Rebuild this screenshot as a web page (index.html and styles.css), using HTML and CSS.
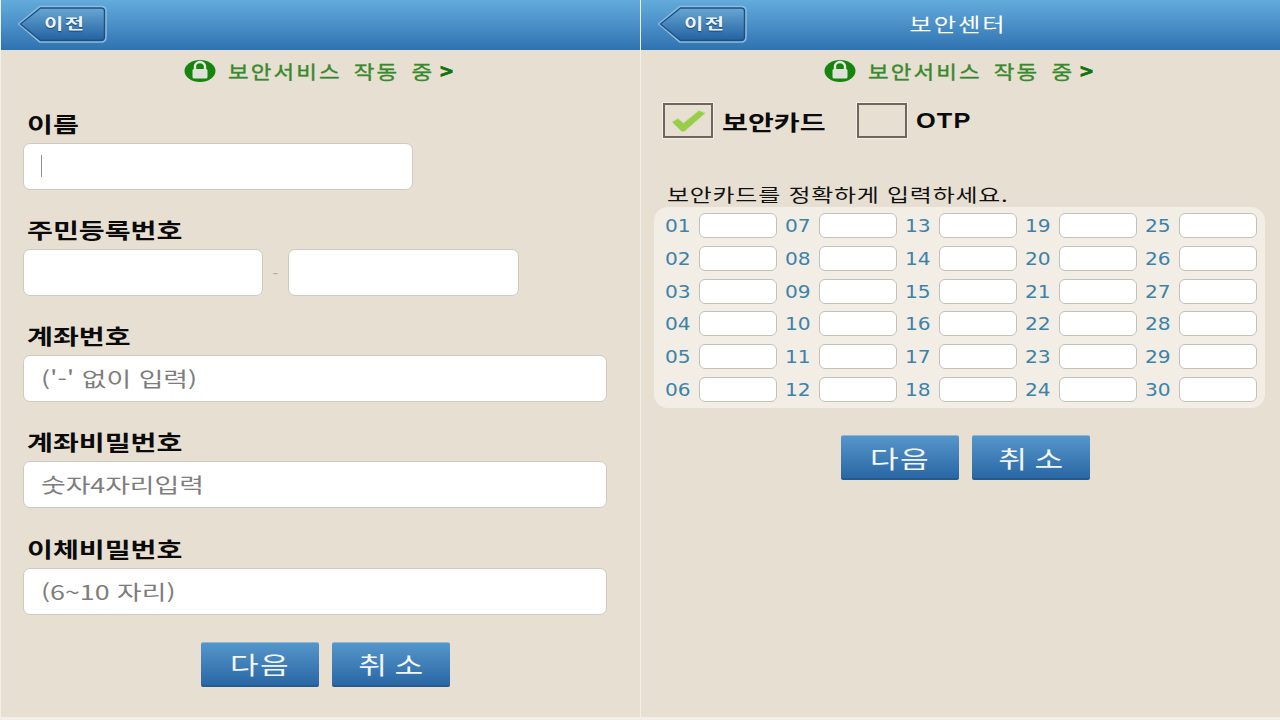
FILE: index.html
```html
<!DOCTYPE html>
<html lang="ko">
<head>
<meta charset="utf-8">
<title>보안센터</title>
<link rel="stylesheet" href="styles.css">
</head>
<body>
<main class="screen">
  <section class="panel">
    <header class="topbar">
      <a class="back">
        <svg class="back-shape" width="90" height="38" viewBox="0 0 90 38"><defs><linearGradient id="bg1" x1="0" y1="0" x2="0" y2="1"><stop offset="0" stop-color="#6ba9d6"/><stop offset="1" stop-color="#205f9f"/></linearGradient></defs><path d="M1.500 19 22 2H83Q87.500 2 87.500 6V32Q87.500 36.500 83 36.500H22Z" fill="url(#bg1)" stroke="#8fbcdc" stroke-width="2.500"/><path d="M2.500 19 22.500 3H83Q86.500 3 86.500 6V32Q86.500 35.500 83 35.500H22.500Z" fill="none" stroke="#1c4f85" stroke-width="1.400"/></svg>
        <span class="back-text">이전</span>
      </a>
    </header>
    <div class="secure">
      <svg width="32" height="24" viewBox="0 0 32 24"><ellipse cx="16" cy="12" rx="15.500" ry="11" fill="#17840f"/><path d="M11 11V7.500a5 4.500 0 0 1 10 0V11" fill="none" stroke="#e8e8e0" stroke-width="2.400"/><rect x="8.500" y="10" width="15" height="9.500" rx="1.500" fill="#dfe0d8"/></svg>
      <span class="secure-text">보안서비스 작동 중</span><b class="secure-arrow">&gt;</b>
    </div>
    <form class="form">
      <div class="group">
        <div class="label"><span class="stretch">이름</span></div>
        <div class="field w390"><i class="caret"></i></div>
      </div>
      <div class="group">
        <div class="label"><span class="stretch">주민등록번호</span></div>
        <div class="pair"><div class="field w240"></div><span class="dash">-</span><div class="field w231"></div></div>
      </div>
      <div class="group">
        <div class="label"><span class="stretch">계좌번호</span></div>
        <div class="field w584"><span class="stretch">('-' 없이 입력)</span></div>
      </div>
      <div class="group">
        <div class="label"><span class="stretch">계좌비밀번호</span></div>
        <div class="field w584"><span class="stretch">숫자4자리입력</span></div>
      </div>
      <div class="group">
        <div class="label"><span class="stretch">이체비밀번호</span></div>
        <div class="field w584"><span class="stretch">(6~10 자리)</span></div>
      </div>
    </form>
    <div class="actions"><a class="btn"><span class="btn-text">다음</span></a><a class="btn"><span class="btn-text">취 소</span></a></div>
  </section>

  <section class="panel">
    <header class="topbar">
      <a class="back">
        <svg class="back-shape" width="90" height="38" viewBox="0 0 90 38"><path d="M1.500 19 22 2H83Q87.500 2 87.500 6V32Q87.500 36.500 83 36.500H22Z" fill="url(#bg1)" stroke="#8fbcdc" stroke-width="2.500"/><path d="M2.500 19 22.500 3H83Q86.500 3 86.500 6V32Q86.500 35.500 83 35.500H22.500Z" fill="none" stroke="#1c4f85" stroke-width="1.400"/></svg>
        <span class="back-text">이전</span>
      </a>
      <h1 class="title">보안센터</h1>
    </header>
    <div class="secure">
      <svg width="32" height="24" viewBox="0 0 32 24"><ellipse cx="16" cy="12" rx="15.500" ry="11" fill="#17840f"/><path d="M11 11V7.500a5 4.500 0 0 1 10 0V11" fill="none" stroke="#e8e8e0" stroke-width="2.400"/><rect x="8.500" y="10" width="15" height="9.500" rx="1.500" fill="#dfe0d8"/></svg>
      <span class="secure-text">보안서비스 작동 중</span><b class="secure-arrow">&gt;</b>
    </div>
    <div class="choices">
      <div class="box"><svg width="36" height="24" viewBox="0 0 36 24"><path d="M2 13 8 9.500l5.500 4.500L29 1.500l6.500 2.500L14.500 22.500h-3Z" fill="#98cd48" stroke="#c3dda0" stroke-width="1"/></svg></div>
      <span class="choice-label first"><span class="stretch">보안카드</span></span>
      <div class="box"></div>
      <span class="choice-label otp"><span class="stretch-otp">OTP</span></span>
    </div>
    <p class="hint">보안카드를 정확하게 입력하세요.</p>
    <div class="card-grid">
      <div class="cell"><span class="num">01</span><i class="slot"></i></div>
      <div class="cell"><span class="num">02</span><i class="slot"></i></div>
      <div class="cell"><span class="num">03</span><i class="slot"></i></div>
      <div class="cell"><span class="num">04</span><i class="slot"></i></div>
      <div class="cell"><span class="num">05</span><i class="slot"></i></div>
      <div class="cell"><span class="num">06</span><i class="slot"></i></div>
      <div class="cell"><span class="num">07</span><i class="slot"></i></div>
      <div class="cell"><span class="num">08</span><i class="slot"></i></div>
      <div class="cell"><span class="num">09</span><i class="slot"></i></div>
      <div class="cell"><span class="num">10</span><i class="slot"></i></div>
      <div class="cell"><span class="num">11</span><i class="slot"></i></div>
      <div class="cell"><span class="num">12</span><i class="slot"></i></div>
      <div class="cell"><span class="num">13</span><i class="slot"></i></div>
      <div class="cell"><span class="num">14</span><i class="slot"></i></div>
      <div class="cell"><span class="num">15</span><i class="slot"></i></div>
      <div class="cell"><span class="num">16</span><i class="slot"></i></div>
      <div class="cell"><span class="num">17</span><i class="slot"></i></div>
      <div class="cell"><span class="num">18</span><i class="slot"></i></div>
      <div class="cell"><span class="num">19</span><i class="slot"></i></div>
      <div class="cell"><span class="num">20</span><i class="slot"></i></div>
      <div class="cell"><span class="num">21</span><i class="slot"></i></div>
      <div class="cell"><span class="num">22</span><i class="slot"></i></div>
      <div class="cell"><span class="num">23</span><i class="slot"></i></div>
      <div class="cell"><span class="num">24</span><i class="slot"></i></div>
      <div class="cell"><span class="num">25</span><i class="slot"></i></div>
      <div class="cell"><span class="num">26</span><i class="slot"></i></div>
      <div class="cell"><span class="num">27</span><i class="slot"></i></div>
      <div class="cell"><span class="num">28</span><i class="slot"></i></div>
      <div class="cell"><span class="num">29</span><i class="slot"></i></div>
      <div class="cell"><span class="num">30</span><i class="slot"></i></div>
    </div>
    <div class="actions actions-card"><a class="btn"><span class="btn-text">다음</span></a><a class="btn"><span class="btn-text">취 소</span></a></div>
  </section>
</main>
</body>
</html>
```
FILE: styles.css
```css
* { box-sizing: border-box; }
html, body { margin: 0; padding: 0; }
body {
  width: 1280px;
  height: 720px;
  overflow: hidden;
  background: #f2efe8;
  font-family: "Noto Sans CJK KR", "Liberation Sans", sans-serif;
}
.screen { display: flex; width: 1280px; height: 717px; }
.panel {
  width: 640px;
  height: 717px;
  background: #e7e0d2;
  border-left: 1px solid #f2efe8;
}
.topbar {
  position: relative;
  display: flex;
  align-items: center;
  justify-content: center;
  height: 50px;
  background: linear-gradient(#63abdb, #4a8fc8 50%, #2f72b0);
}
.back {
  position: absolute;
  left: 17px;
  top: 5px;
  display: block;
  width: 90px;
  height: 38px;
}
.back-shape { position: absolute; left: 0; top: 0; }
.back-text {
  position: absolute;
  left: 26px;
  top: 5px;
  font-size: 15px;
  line-height: 26px;
  font-weight: 700;
  letter-spacing: 1px;
  color: #eef4f9;
  text-shadow: 0 1px 1px #17406c;
  transform: scaleX(1.4);
  transform-origin: left center;
}
.title {
  margin: 0 6px 2px 0;
  font-size: 19px;
  line-height: 26px;
  font-weight: 400;
  letter-spacing: 1.500px;
  color: #fff;
  transform: scaleX(1.28);
}
.secure {
  display: flex;
  align-items: center;
  justify-content: center;
  height: 24px;
  margin-top: 9px;
  padding-right: 3px;
  color: #38892e;
}
.secure svg { flex: none; }
.secure-text {
  display: block;
  width: 203px;
  margin-left: 12px;
  font-size: 18px;
  line-height: 24px;
  letter-spacing: 1.700px;
  word-spacing: 3px;
  white-space: nowrap;
  -webkit-text-stroke: 0.35px #38892e;
  transform: scaleX(1.245);
  transform-origin: left center;
}
.secure-arrow {
  margin-left: 8px;
  font-family: "DejaVu Sans", sans-serif;
  font-size: 18px;
  line-height: 24px;
  color: #17700f;
  -webkit-text-stroke: 0.8px #17700f;
}
.stretch {
  display: inline-block;
  transform: scaleX(1.34);
  transform-origin: left center;
  white-space: nowrap;
}
.form { display: flex; flex-direction: column; gap: 13px; padding: 13.500px 0 0 22px; }
.group { display: flex; flex-direction: column; height: 93.330px; }
.label {
  height: 46px;
  padding: 7px 0 0 4px;
  font-size: 21px;
  line-height: 38px;
  font-weight: 700;
  color: #0b0b0b;
}
.field {
  display: flex;
  align-items: center;
  height: 47px;
  padding-left: 17px;
  background: #fff;
  border: 1px solid #cfcabf;
  border-radius: 7px;
  font-size: 20px;
  color: #7d7d7d;
}
.w390 { width: 390px; }
.w240 { width: 240px; }
.w231 { width: 231px; }
.w584 { width: 584px; }
.caret { display: block; width: 1px; height: 22px; background: #8f8f8f; }
.pair { display: flex; align-items: center; }
.dash { width: 25px; text-align: center; font-size: 17px; color: #b5b0a5; }
.actions { display: flex; gap: 13px; margin: 26.500px 0 0 200px; }
.btn {
  display: flex;
  align-items: center;
  justify-content: center;
  width: 118px;
  height: 45px;
  background: linear-gradient(#5596ca, #2a67a5);
  border-top: 1px solid #8db6d8;
  border-bottom: 2px solid #245a92;
  border-radius: 2px;
  font-size: 24px;
  letter-spacing: 1px;
  word-spacing: -3px;
  color: #f2f6f9;
}
.btn-text { display: inline-block; transform: scaleX(1.3); }
.choices { display: flex; align-items: center; margin: 20px 0 0 22px; height: 35px; }
.box {
  display: flex;
  align-items: center;
  justify-content: center;
  width: 50px;
  height: 35px;
  border: 2px solid #6d675d;
  outline: 1px solid #f2efe8;
}
.choice-label {
  margin-left: 9px;
  font-size: 21px;
  font-weight: 700;
  line-height: 30px;
  color: #0b0b0b;
}
.choice-label.first { width: 135px; }
.choice-label.otp { font-family: "Liberation Sans", sans-serif; font-size: 22px; letter-spacing: 1px; }
.stretch-otp { display: inline-block; transform: scaleX(1.15); transform-origin: left center; }
.hint {
  width: 256px;
  margin: 44px 0 0 26px;
  height: 25px;
  font-size: 18px;
  line-height: 24px;
  color: #111;
  letter-spacing: 0.600px;
  white-space: nowrap;
  transform: scaleX(1.328);
  transform-origin: left center;
}
.card-grid {
  display: grid;
  grid-auto-flow: column;
  grid-template-rows: repeat(6, 25px);
  grid-template-columns: repeat(5, 119.900px);
  row-gap: 7.750px;
  width: 611px;
  height: 201px;
  margin-left: 13px;
  padding: 6px 0 0 11px;
  background: #f2eee6;
  border-radius: 14px;
}
.cell { display: flex; align-items: center; }
.num {
  width: 34px;
  font-family: "DejaVu Sans", sans-serif;
  font-size: 18px;
  line-height: 25px;
  color: #3d82a8;
  transform: scaleX(1.12);
  transform-origin: left center;
}
.slot {
  display: block;
  width: 78px;
  height: 25px;
  background: #fff;
  border: 1px solid #c5c1b7;
  border-radius: 6px;
}
.actions-card { margin-top: 27px; }
```
